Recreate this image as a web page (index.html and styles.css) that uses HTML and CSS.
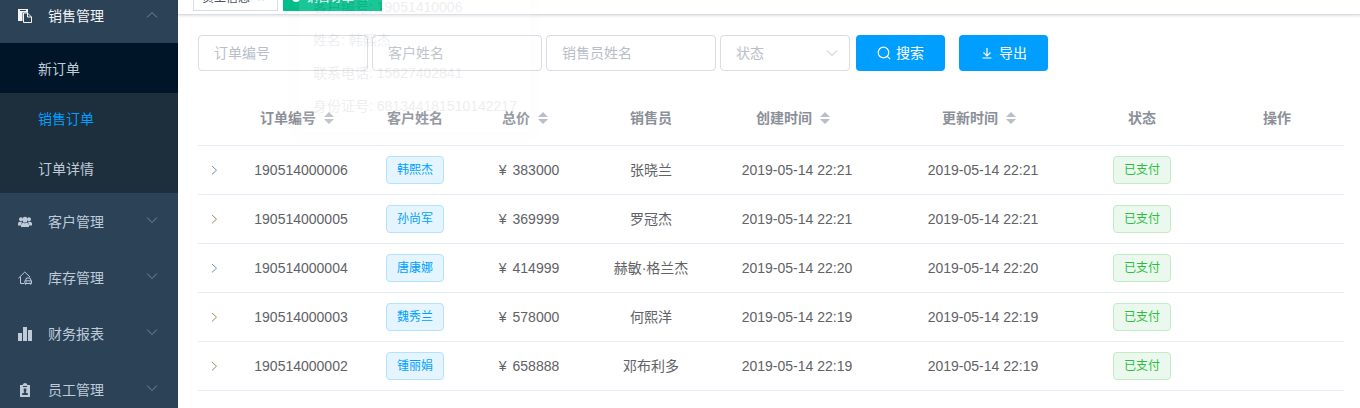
FILE: index.html
```html
<!DOCTYPE html>
<html lang="zh-CN">
<head>
<meta charset="utf-8">
<title>销售订单</title>
<link rel="stylesheet" href="styles.css">
</head>
<body>
<svg class="defs" aria-hidden="true">
  <symbol id="down" viewBox="0 0 12 12"><path d="M1 3.500l5 5 5-5" fill="none" stroke="currentColor"/></symbol>
  <symbol id="right" viewBox="0 0 12 12"><path d="M4 2l4.500 4.200-4.500 4.200" fill="none" stroke="currentColor"/></symbol>
  <symbol id="sort" viewBox="0 0 10 12"><path d="M5 0l5 5H0zM5 12l5-5H0z" fill="currentColor"/></symbol>
</svg>
<div class="app">
  <nav class="sidebar">
    <a class="menu-title open" href="#">
      <svg class="menu-icon" viewBox="0 0 14 14"><path fill="currentColor" d="M0 0h10v4H5v8H0z"/><path fill="#2b4257" d="M2 1h6v1H2zM4.500 3.500H9l5 4V14H4.500z"/><path fill="none" stroke="currentColor" d="M5.500 4h4l4 4v5.500h-8zM9.500 4v4h4"/></svg>
      <span>销售管理</span>
      <svg class="arrow up"><use href="#down"/></svg>
    </a>
    <div class="submenu">
      <a class="menu-item hover" href="#">新订单</a>
      <a class="menu-item active" href="#">销售订单</a>
      <a class="menu-item" href="#">订单详情</a>
    </div>
    <a class="menu-title" href="#">
      <svg class="menu-icon" viewBox="0 0 14 14" fill="currentColor"><circle cx="3" cy="4.200" r="2"/><circle cx="11" cy="4.200" r="2"/><path d="M0 10.500V8.500Q0 6.700 2 6.700h2.200L3 9v1.500zM14 10.500V8.500Q14 6.700 12 6.700H9.800L11 9v1.500z"/><ellipse cx="7" cy="4.700" rx="2.400" ry="2.900"/><path d="M3 12v-2q0-2 2.500-2.400L7 8.600l1.500-1q2.500.4 2.500 2.400v2z"/></svg>
      <span>客户管理</span>
      <svg class="arrow"><use href="#down"/></svg>
    </a>
    <a class="menu-title" href="#">
      <svg class="menu-icon" viewBox="0 0 14 14" fill="none" stroke="currentColor"><path d="M.5 7.200L6.800 1l5.200 5M2.500 6v6.500H6"/><path d="M7.500 9.500l1-2.500h3.500l1 2.500M6.800 9.800h6.700v2.700H6.800zM7.500 12.500v1.200M12.700 12.500v1.200M8 11h1M11.500 11h1"/></svg>
      <span>库存管理</span>
      <svg class="arrow"><use href="#down"/></svg>
    </a>
    <a class="menu-title" href="#">
      <svg class="menu-icon" viewBox="0 0 14 14" fill="currentColor"><path d="M0 6h4v8H0zM5 0h4v14H5zM10 3h4v11h-4z"/></svg>
      <span>财务报表</span>
      <svg class="arrow"><use href="#down"/></svg>
    </a>
    <a class="menu-title" href="#">
      <svg class="menu-icon" viewBox="0 0 14 14"><path fill="currentColor" d="M2 2h2.500L5.500.5Q7-.5 8.500.5L9.500 2H12v12H2z"/><path fill="#2b4257" d="M5 3h4v1H5zM5.700 5.500h2.600v3H7.800v1.200l2 .6V12H4.200v-1.700l2-.6V8.500h-.5z"/></svg>
      <span>员工管理</span>
      <svg class="arrow"><use href="#down"/></svg>
    </a>
  </nav>
  <div class="content">
    <div class="tags">
      <a class="tab" href="#">员工信息<span class="close">×</span></a>
      <a class="tab current" href="#"><i class="dot"></i>销售订单<span class="close">×</span></a>
    </div>
    <main>
      <form class="filters">
        <input class="field" type="text" placeholder="订单编号" aria-label="订单编号">
        <input class="field" type="text" placeholder="客户姓名" aria-label="客户姓名">
        <input class="field" type="text" placeholder="销售员姓名" aria-label="销售员姓名">
        <span class="select-wrap">
          <select class="field" aria-label="状态"><option>状态</option><option>已支付</option></select>
          <svg class="select-arrow"><use href="#down"/></svg>
        </span>
        <button class="btn search" type="button"><svg viewBox="0 0 14 14" fill="none" stroke="currentColor" stroke-width="1.200"><circle cx="6.500" cy="6.500" r="5.300"/><path d="M10.300 10.300l2.900 2.900"/></svg>搜索</button>
        <button class="btn export" type="button"><svg viewBox="0 0 14 14" fill="none" stroke="currentColor" stroke-width="1.200"><path d="M7 2v8M3.500 6.500L7 10l3.500-3.500M2.500 12h9"/></svg>导出</button>
      </form>
      <table class="orders">
        <colgroup><col class="c-expand"><col class="c-order"><col class="c-name"><col class="c-total"><col class="c-seller"><col class="c-created"><col class="c-updated"><col class="c-status"><col class="c-ops"></colgroup>
        <thead>
          <tr><th></th><th class="sortable">订单编号<svg class="sort"><use href="#sort"/></svg></th><th>客户姓名</th><th class="sortable">总价<svg class="sort"><use href="#sort"/></svg></th><th>销售员</th><th class="sortable">创建时间<svg class="sort"><use href="#sort"/></svg></th><th class="sortable">更新时间<svg class="sort"><use href="#sort"/></svg></th><th>状态</th><th>操作</th></tr>
        </thead>
        <tbody>
          <tr><td><button class="expand blue" type="button" aria-label="展开"><svg><use href="#right"/></svg></button></td><td>190514000006</td><td><span class="badge info">韩熙杰</span></td><td><span class="yen">¥</span>383000</td><td>张晓兰</td><td>2019-05-14 22:21</td><td>2019-05-14 22:21</td><td><span class="badge paid">已支付</span></td><td></td></tr>
          <tr><td><button class="expand" type="button" aria-label="展开"><svg><use href="#right"/></svg></button></td><td>190514000005</td><td><span class="badge info">孙尚军</span></td><td><span class="yen">¥</span>369999</td><td>罗冠杰</td><td>2019-05-14 22:21</td><td>2019-05-14 22:21</td><td><span class="badge paid">已支付</span></td><td></td></tr>
          <tr><td><button class="expand blue" type="button" aria-label="展开"><svg><use href="#right"/></svg></button></td><td>190514000004</td><td><span class="badge info">唐康娜</span></td><td><span class="yen">¥</span>414999</td><td>赫敏·格兰杰</td><td>2019-05-14 22:20</td><td>2019-05-14 22:20</td><td><span class="badge paid">已支付</span></td><td></td></tr>
          <tr><td><button class="expand" type="button" aria-label="展开"><svg><use href="#right"/></svg></button></td><td>190514000003</td><td><span class="badge info">魏秀兰</span></td><td><span class="yen">¥</span>578000</td><td>何熙洋</td><td>2019-05-14 22:19</td><td>2019-05-14 22:19</td><td><span class="badge paid">已支付</span></td><td></td></tr>
          <tr><td><button class="expand" type="button" aria-label="展开"><svg><use href="#right"/></svg></button></td><td>190514000002</td><td><span class="badge info">锺丽娟</span></td><td><span class="yen">¥</span>658888</td><td>邓布利多</td><td>2019-05-14 22:19</td><td>2019-05-14 22:19</td><td><span class="badge paid">已支付</span></td><td></td></tr>
        </tbody>
      </table>
    </main>
    <div class="popover">
      <p>客户编号: 19051410006</p>
      <p>姓名: 韩熙杰</p>
      <p>联系电话: 15627402841</p>
      <p>身份证号: 681344181510142217</p>
    </div>
  </div>
</div>
</body>
</html>
```
FILE: styles.css
```css
* { box-sizing: border-box; }
body {
  margin: 0;
  overflow: hidden;
  background: #fff;
  color: #606266;
  font: 14px/20px "Liberation Sans", "Noto Sans CJK SC", sans-serif;
}
a { color: inherit; text-decoration: none; }
.defs { position: absolute; width: 0; height: 0; }
.app { display: flex; height: 100vh; overflow: hidden; }

.sidebar {
  flex: none;
  width: 178px;
  margin-top: -13px;
  background: #2b4257;
  color: #bfcbd9;
}
.menu-title {
  display: flex;
  align-items: center;
  height: 56px;
  padding: 2px 20px 0 18px;
}
.menu-title.open { color: #f4f4f5; }
.menu-icon { width: 14px; height: 14px; margin-right: 16px; }
.arrow { width: 12px; height: 12px; margin: 0 0 4px auto; color: #7b8793; }
.arrow.up { margin-bottom: 2px; transform: rotate(180deg); }
.submenu { background: #1d2e3c; }
.menu-item { display: block; height: 50px; padding-left: 38px; line-height: 52px; }
.menu-item.hover { background: #001528; }
.menu-item.active { color: #009fff; }

.content { position: relative; flex: 1; min-width: 0; }
.tags {
  display: flex;
  gap: 5px;
  height: 35px;
  margin-top: -20px;
  padding: 5px 15px 0;
  border-bottom: 1px solid #d8dce5;
  box-shadow: 0 1px 3px rgba(0, 0, 0, .12);
}
.tab {
  display: flex;
  align-items: center;
  height: 26px;
  padding: 0 8px;
  border: 1px solid #d8dce5;
  color: #495060;
  font-size: 12px;
}
.tab.current { border-color: #00bf8a; background: #00bf8a; color: #fff; }
.dot { width: 8px; height: 8px; margin-right: 6px; border-radius: 50%; background: #fff; }
.close { width: 16px; margin-left: 3px; text-align: center; }

main { padding: 20px 16px 0 20px; }
.filters { display: flex; align-items: center; }
.field {
  width: 170px;
  height: 36px;
  margin: 0 4px 0 0;
  padding: 0 15px;
  border: 1px solid #d8dce5;
  border-radius: 4px;
  background: transparent;
  color: #b9bec8;
  font: inherit;
}
.field::placeholder { color: #b9bec8; opacity: 1; }
.select-wrap { position: relative; }
select.field { width: 130px; appearance: none; }
.select-arrow { position: absolute; top: 12px; right: 16px; width: 12px; height: 12px; color: #b9bec8; }
.btn {
  display: flex;
  align-items: center;
  justify-content: center;
  gap: 5px;
  height: 36px;
  padding: 0 21px;
  border: 0;
  border-radius: 4px;
  background: #009fff;
  color: #fff;
  font: inherit;
}
.btn svg { width: 14px; height: 14px; }
.search { margin-left: 2px; }
.export { margin-left: 14px; }

.orders {
  width: 100%;
  margin-top: 20px;
  border-collapse: collapse;
  table-layout: fixed;
  text-align: center;
}
.c-expand { width: 32px; }
.c-order, .c-total { width: 142px; }
.c-name { width: 86px; }
.c-seller { width: 102px; }
.c-created { width: 190px; }
.c-updated { width: 182px; }
.c-status { width: 136px; }
.c-ops { width: 134px; }
th, td { height: 49px; padding: 0; border-bottom: 1px solid #e6ebf5; white-space: nowrap; }
th { height: 54px; color: #8b8f98; }
.sortable { padding-right: 8px; }
.sort { width: 10px; height: 12px; margin-left: 8px; color: #b9bec8; vertical-align: -1px; }
.yen { margin-right: 6px; }
.expand { display: block; margin: 0 auto; padding: 0; border: 0; background: none; color: #a08868; }
.expand.blue { color: #6d8fb8; }
.expand svg { display: block; width: 12px; height: 12px; }
.badge {
  display: inline-block;
  height: 28px;
  padding: 0 10px;
  border: 1px solid;
  border-radius: 4px;
  font-size: 12px;
  line-height: 26px;
  vertical-align: middle;
}
.info { border-color: #b3e2ff; background: #e5f5ff; color: #009fff; }
.paid { border-color: #c2ebc8; background: #ebf8ed; color: #2ac03e; }

.popover {
  position: absolute;
  top: -19px;
  left: 121px;
  padding: 16px 14px;
  border-radius: 4px;
  background: #fff;
  box-shadow: 0 2px 12px rgba(0, 0, 0, .1);
  opacity: .1;
  pointer-events: none;
}
.popover p { margin: 0 0 13px; line-height: 20px; white-space: nowrap; }
.popover p:last-child { margin-bottom: 0; }
```
